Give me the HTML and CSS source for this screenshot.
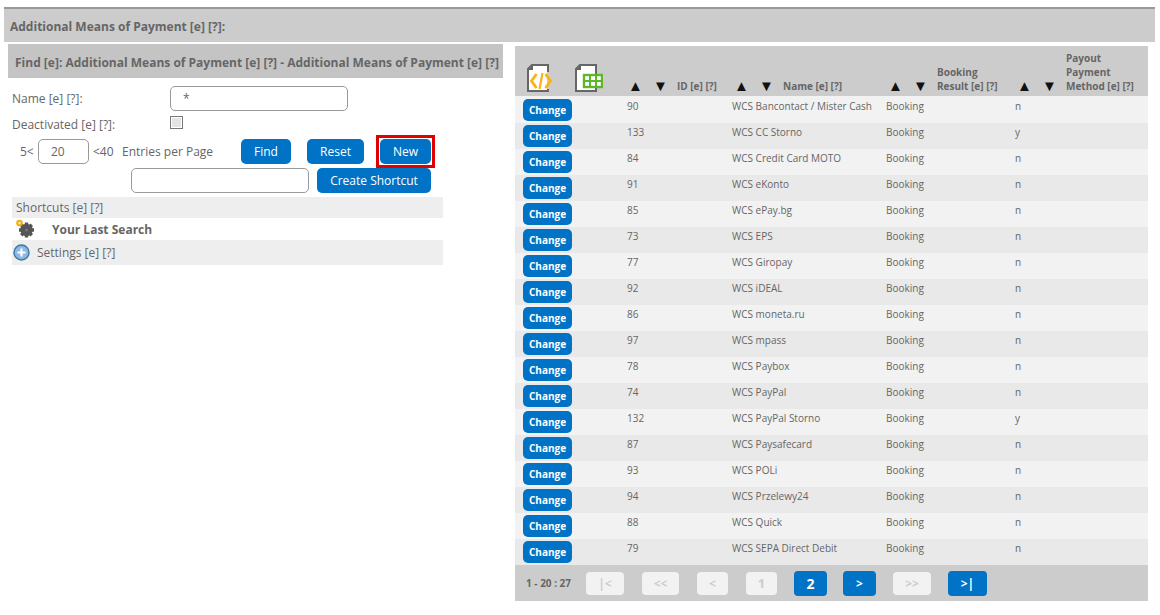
FILE: index.html
```html
<!DOCTYPE html>
<html lang="en">
<head>
  <meta charset="UTF-8" />
  <title>Additional Means of Payment</title>
  <link rel="stylesheet" href="styles.css">
</head>
<body>
  <header class="page-title">Additional Means of Payment [e] [?]:</header>

  <main class="page-body">
    <section class="search-panel">
      <h2 class="panel-title">Find [e]: Additional Means of Payment [e] [?] - Additional Means of Payment [e] [?]</h2>

      <div class="form-row name-row">
        <label class="field-label">Name [e] [?]:</label>
        <input type="text" class="text-input" value="*" />
      </div>
      <div class="form-row deact-row">
        <label class="field-label">Deactivated [e] [?]:</label>
        <span class="fake-check"></span>
      </div>
      <div class="form-row paging-row">
        <span class="min-label">5&lt;</span>
        <input type="text" class="text-input count-input" value="20" />
        <span class="max-label">&lt;40</span>
        <span class="per-page">Entries per Page</span>
        <button class="btn find-btn">Find</button>
        <button class="btn reset-btn">Reset</button>
        <span class="highlight"><button class="btn new-btn">New</button></span>
      </div>
      <div class="form-row shortcut-row">
        <input type="text" class="text-input" />
        <button class="btn create-btn">Create Shortcut</button>
      </div>

      <div class="side-list">
        <div class="side-bar shortcuts">Shortcuts [e] [?]</div>
        <div class="last-search">
          <svg class="gear" width="20" height="20" viewBox="0 0 20 20">
            <g fill="#555">
              <circle cx="11.500" cy="11" r="6.200" />
              <rect x="9.800" y="3.500" width="3.400" height="15" />
              <rect x="4" y="9.300" width="15" height="3.400" />
              <rect x="9.800" y="3.500" width="3.400" height="15" transform="rotate(45 11.500 11)" />
              <rect x="9.800" y="3.500" width="3.400" height="15" transform="rotate(-45 11.500 11)" />
            </g>
            <circle cx="11.500" cy="11" r="1.500" fill="#777" />
            <circle cx="4.500" cy="4" r="2.300" fill="#fde9b0" stroke="#f2ac10" stroke-width="2" />
          </svg>
          <strong>Your Last Search</strong>
        </div>
        <div class="side-bar settings">
          <svg width="17" height="17" viewBox="0 0 17 17">
            <circle cx="8.500" cy="8.500" r="7.500" fill="#8db8e0" stroke="#3a78a8" stroke-width="1.400" />
            <path d="M8.500 4.500v8M4.500 8.500h8" stroke="#fff" stroke-width="2.200" />
          </svg>
          Settings [e] [?]
        </div>
      </div>
    </section>

    <section class="result-panel">
      <table class="result-table">
        <colgroup>
          <col class="col-action" /><col class="col-id" /><col class="col-name" /><col class="col-result" /><col class="col-payout" />
        </colgroup>
        <thead>
          <tr>
            <th class="export-cell">
              <svg class="export-icon" width="26" height="28" viewBox="0 0 26 28">
                <path d="M5 1h16v26H1V5z" fill="#fff" stroke="#666" stroke-width="2" />
                <path d="M5 1v4H1" fill="none" stroke="#666" stroke-width="2" />
                <rect x="20" y="8" width="4" height="17" fill="#ccc" />
                <path d="M9.500 10l-5 7 5 7M18.500 10l5 7-5 7" fill="none" stroke="#fbb116" stroke-width="2.800" />
                <path d="M15.500 9l-3 16" fill="none" stroke="#fbb116" stroke-width="2.200" />
              </svg>
              <svg class="export-icon" width="28" height="28" viewBox="0 0 28 28">
                <path d="M5 1h16v26H1V5z" fill="#fff" stroke="#666" stroke-width="2" />
                <path d="M5 1v4H1" fill="none" stroke="#666" stroke-width="2" />
                <rect x="9" y="11" width="18" height="12" fill="#fff" stroke="#5cb82a" stroke-width="2.400" />
                <path d="M15 11v12M21 11v12M9 17h18" stroke="#5cb82a" stroke-width="2" />
              </svg>
            </th>
            <th></th>
            <th></th>
            <th></th>
            <th></th>
          </tr>
        </thead>
        <tbody id="rows"></tbody>
      </table>
      <div class="pager">
        <span class="pager-count">1 - 20 : 27</span>
        <span class="page-btn off first">|&lt;</span>
        <span class="page-btn off prev-many">&lt;&lt;</span>
        <span class="page-btn off prev">&lt;</span>
        <span class="page-btn off one">1</span>
        <span class="page-btn on two">2</span>
        <span class="page-btn on next">&gt;</span>
        <span class="page-btn off next-many">&gt;&gt;</span>
        <span class="page-btn on last">&gt;|</span>
      </div>
    </section>
  </main>

  <script src="script.js"></script>
</body>
</html>
```

FILE: script.js
```js
const payments = [
  [90, "WCS Bancontact / Mister Cash", "n"],
  [133, "WCS CC Storno", "y"],
  [84, "WCS Credit Card MOTO", "n"],
  [91, "WCS eKonto", "n"],
  [85, "WCS ePay.bg", "n"],
  [73, "WCS EPS", "n"],
  [77, "WCS Giropay", "n"],
  [92, "WCS iDEAL", "n"],
  [86, "WCS moneta.ru", "n"],
  [97, "WCS mpass", "n"],
  [78, "WCS Paybox", "n"],
  [74, "WCS PayPal", "n"],
  [132, "WCS PayPal Storno", "y"],
  [87, "WCS Paysafecard", "n"],
  [93, "WCS POLi", "n"],
  [94, "WCS Przelewy24", "n"],
  [88, "WCS Quick", "n"],
  [79, "WCS SEPA Direct Debit", "n"]
];

const headers = ["ID [e] [?]", "Name [e] [?]", "Booking<br>Result [e] [?]", "Payout<br>Payment<br>Method [e] [?]"];
const headCells = document.querySelectorAll(".result-table th");

// arrows sit in the column before each label
[1, 2, 3, 4].forEach((col, i) => {
  headCells[col].innerHTML =
    `<div class="sort-head"><span class="sort-arrow">▲</span><span class="sort-arrow">▼</span><span class="sort-label">${headers[i]}</span></div>`;
});

document.getElementById("rows").innerHTML = payments.map(([id, name, payout]) => `
  <tr>
    <td><button class="btn change-btn">Change</button></td>
    <td>${id}</td>
    <td>${name}</td>
    <td>Booking</td>
    <td>${payout}</td>
  </tr>`).join("");
```

FILE: styles.css
```css
* {
  box-sizing: border-box;
}

body {
  margin: 0;
  font-family: "Open Sans", Arial, sans-serif;
  font-size: 12px;
  color: #666;
  background: #fff;
}

.page-title {
  margin: 7px 5px 0 4px;
  height: 35px;
  padding: 9px 6px 0;
  background: #ccc;
  border-top: 2px solid #999;
  font-weight: bold;
  font-size: 12px;
}

.page-body {
  display: flex;
  align-items: flex-start;
  padding-left: 8px;
  gap: 12px;
}

.search-panel {
  width: 495px;
  margin-top: 2px;
}

.panel-title {
  margin: 0;
  height: 34px;
  padding: 10px 0 0 7px;
  background: #c4c4c4;
  font-size: 12px;
  font-weight: bold;
  white-space: nowrap;
}

.form-row {
  display: flex;
  align-items: center;
}

.field-label {
  width: 158px;
  margin-left: 4px;
}

.text-input {
  width: 178px;
  height: 25px;
  padding: 0 12px;
  border: 1px solid #999;
  border-radius: 5px;
  font: 12px "Open Sans", Arial, sans-serif;
  color: #666;
  outline: none;
}

.name-row {
  margin-top: 8px;
}

.deact-row {
  margin-top: 4px;
  height: 20px;
  align-items: flex-start;
}

.deact-row .field-label {
  margin-top: 1px;
}

.fake-check {
  width: 13px;
  height: 13px;
  margin-top: 1px;
  border: 1px solid #777;
  background: #e4e4e4;
  box-shadow: inset 0 0 0 1px #fff;
}

.paging-row {
  height: 25px;
  margin-top: 4px;
  padding-left: 12px;
}

.min-label {
  width: 18px;
}

.count-input {
  width: 51px;
}

.max-label {
  margin-left: 4px;
  width: 29px;
}

.per-page {
  width: 119px;
}

.btn {
  height: 25px;
  padding: 0;
  border: none;
  border-radius: 5px;
  background: #0073c6;
  color: #fff;
  font: 12px "Open Sans", Arial, sans-serif;
}

.find-btn {
  width: 50px;
}

.reset-btn {
  width: 57px;
  margin-left: 16px;
}

.highlight {
  display: flex;
  margin: -4px 0 -4px 12px;
  padding: 1px;
  border: 3px solid #e00000;
}

.new-btn {
  width: 51px;
}

.shortcut-row {
  margin-top: 4px;
  padding-left: 123px;
  gap: 8px;
}

.create-btn {
  width: 114px;
}

.side-list {
  width: 431px;
  margin: 4px 0 0 4px;
}

.side-bar {
  display: flex;
  align-items: center;
  background: #eee;
}

.shortcuts {
  height: 21px;
  padding-left: 4px;
}

.settings {
  height: 25px;
  gap: 7px;
  padding-left: 1px;
}

.last-search {
  display: flex;
  align-items: center;
  height: 22px;
  padding-left: 3px;
}

.last-search strong {
  margin-left: 17px;
}

.result-panel {
  width: 633px;
  margin-top: 4px;
  background: #ccc;
}

.result-table {
  width: 633px;
  table-layout: fixed;
  border-collapse: collapse;
  font-size: 10px;
}

.col-action { width: 112px; }
.col-id { width: 105px; }
.col-name { width: 154px; }
.col-result { width: 129px; }
.col-payout { width: 133px; }

.result-table th {
  height: 50px;
  padding: 0 0 3px;
  vertical-align: bottom;
  text-align: left;
  font-weight: bold;
  line-height: 14px;
}

.result-table th.export-cell {
  padding-bottom: 4px;
  white-space: nowrap;
}

.export-icon {
  display: inline-block;
  vertical-align: bottom;
}

.export-icon:first-child {
  margin: 0 19px 0 12px;
}

.sort-head {
  display: flex;
  align-items: flex-end;
  padding-left: 1px;
}

th:nth-child(n+3) .sort-head {
  padding-left: 2px;
}

.sort-arrow {
  width: 25px;
  margin-bottom: 1px;
  color: #111;
  font-size: 15px;
  line-height: 14px;
}

.sort-label {
  margin-left: -1px;
  white-space: nowrap;
}

.result-table tbody tr {
  background: #f2f2f2;
}

.result-table tbody tr:nth-child(even) {
  background: #e9e9e9;
}

.result-table td {
  height: 26px;
  padding: 0 0 8px;
  white-space: nowrap;
  line-height: 14px;
}

.result-table td:first-child {
  padding: 2px 0 0 8px;
  vertical-align: top;
}

.result-table tr:first-child td {
  height: 27px;
  padding-bottom: 7px;
}

.result-table tr:first-child td:first-child {
  padding: 3px 0 0 8px;
}

.change-btn {
  display: block;
  width: 49px;
  height: 22px;
  font-size: 10px;
  font-weight: bold;
}

.pager {
  display: flex;
  align-items: center;
  height: 36px;
  padding-left: 11px;
  font-weight: bold;
}

.pager-count {
  width: 60px;
  font-size: 10px;
}

.page-btn {
  display: flex;
  align-items: center;
  justify-content: center;
  height: 23px;
  border-radius: 4px;
  font-size: 12px;
}

.page-btn.off {
  background: #f2f2f2;
  color: #ccc;
}

.page-btn.on {
  height: 25px;
  background: #0073c6;
  color: #fff;
}

.first { width: 38px; }
.prev-many { width: 37px; margin-left: 18px; }
.prev { width: 31px; margin-left: 18px; }
.one { width: 31px; margin-left: 18px; font-size: 13px; }
.two { width: 33px; margin-left: 17px; font-size: 14px; }
.next { width: 33px; margin-left: 16px; }
.next-many { width: 38px; margin-left: 17px; }
.last { width: 39px; margin-left: 17px; }
```
